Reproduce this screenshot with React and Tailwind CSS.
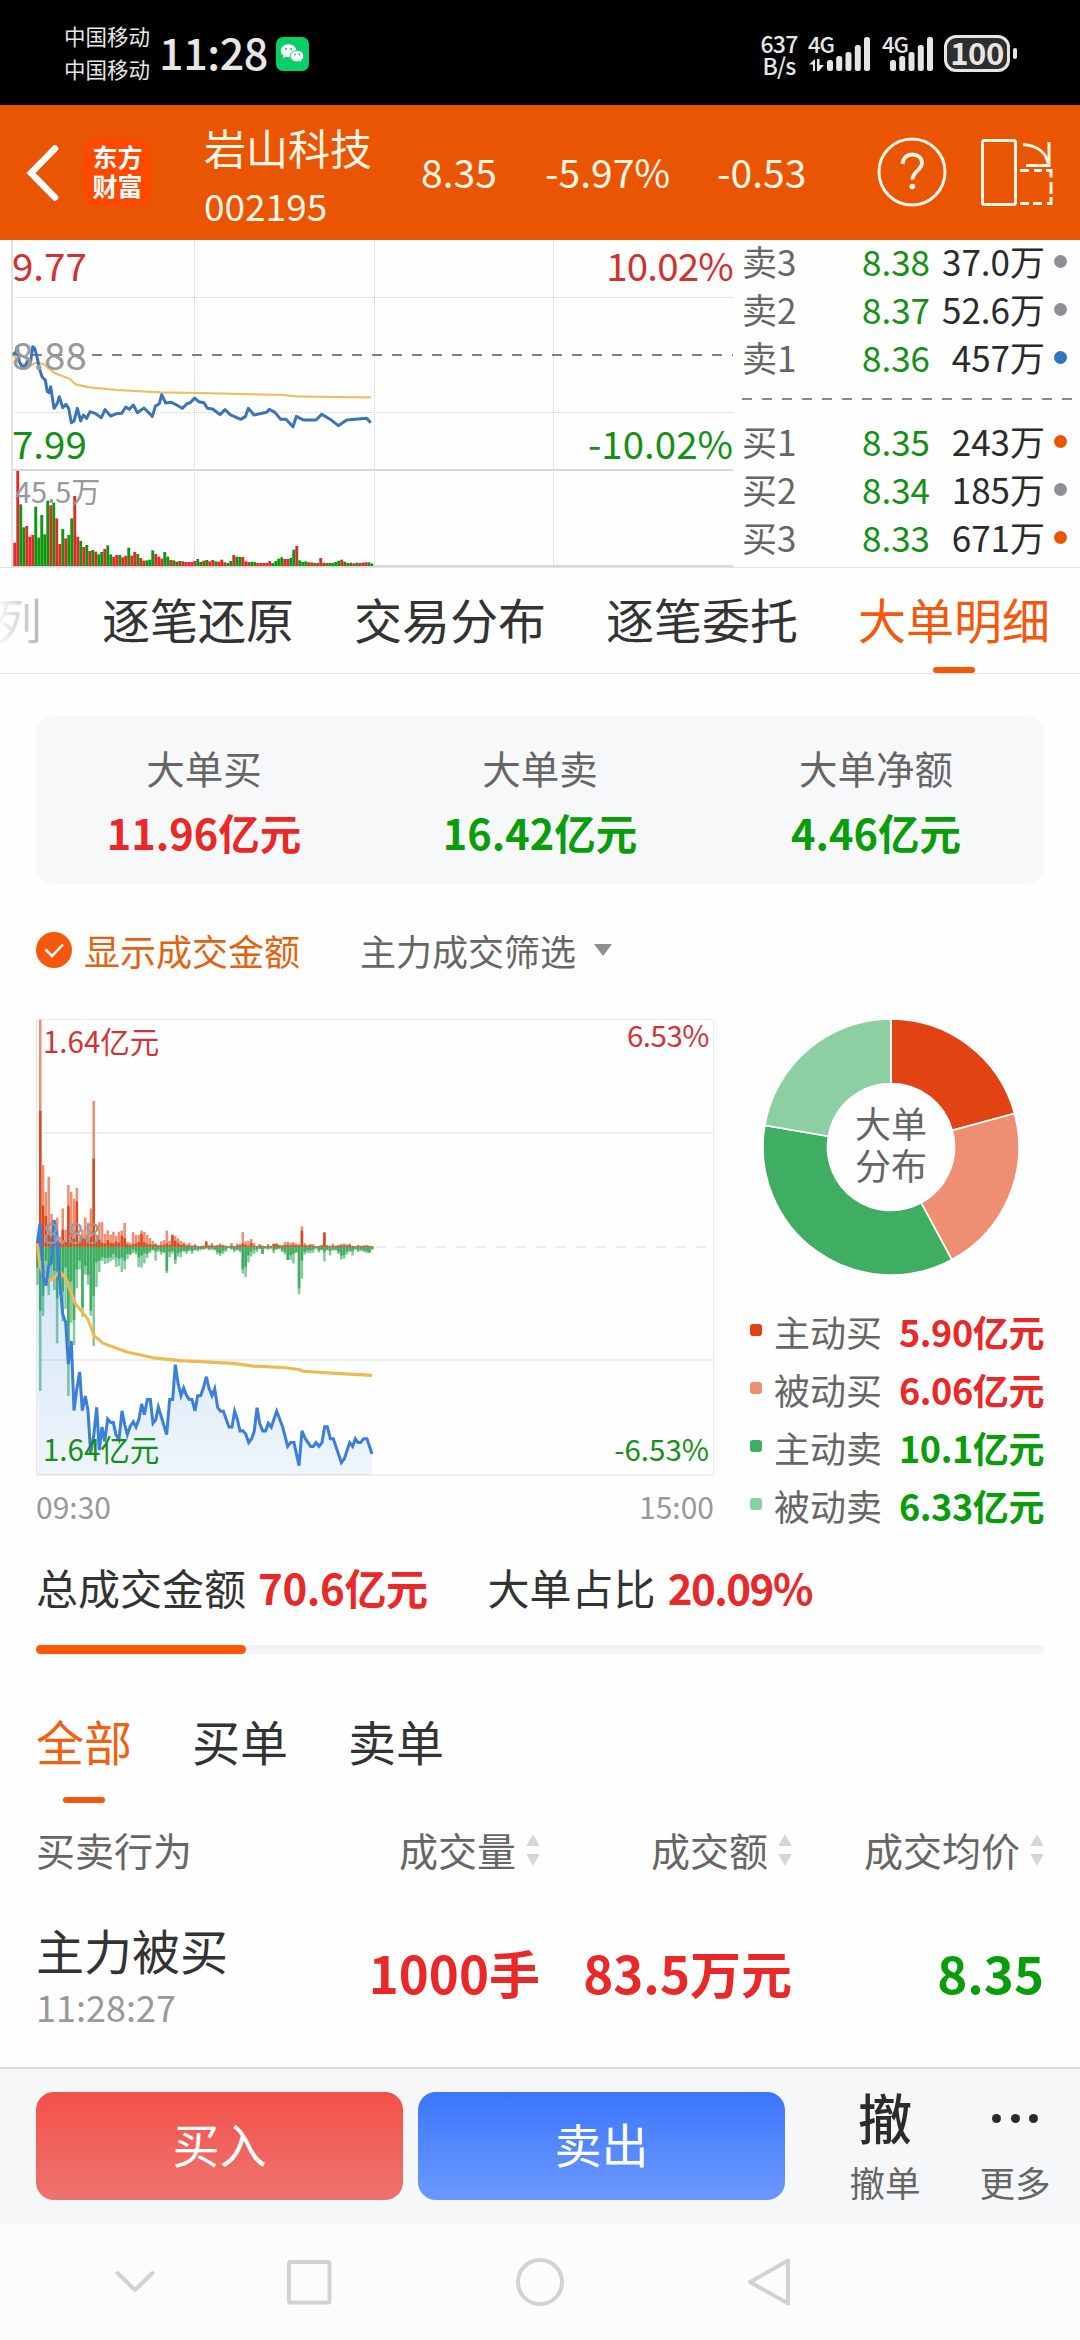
import { Fragment } from "react";

const orderBook = [
  { label: "卖3", price: "8.38", amount: "37.0万", dot: "bg-[#8f8f96]" },
  { label: "卖2", price: "8.37", amount: "52.6万", dot: "bg-[#8f8f96]" },
  { label: "卖1", price: "8.36", amount: "457万", dot: "bg-[#3072c4]" },
  { label: "买1", price: "8.35", amount: "243万", dot: "bg-[#ea5504]" },
  { label: "买2", price: "8.34", amount: "185万", dot: "bg-[#8f8f96]" },
  { label: "买3", price: "8.33", amount: "671万", dot: "bg-[#ea5504]" },
];

const summary = [
  { label: "大单买", value: "11.96亿元", color: "text-[#e92828]" },
  { label: "大单卖", value: "16.42亿元", color: "text-[#0a9d0a]" },
  { label: "大单净额", value: "4.46亿元", color: "text-[#0a9d0a]" },
];

const shares = [
  { label: "主动买", value: "5.90亿元", amount: 5.9, fill: "#e14315", dot: "bg-[#e14315]", color: "text-[#e92828]" },
  { label: "被动买", value: "6.06亿元", amount: 6.06, fill: "#ee8f73", dot: "bg-[#ee8f73]", color: "text-[#e92828]" },
  { label: "主动卖", value: "10.1亿元", amount: 10.1, fill: "#3fae63", dot: "bg-[#3fae63]", color: "text-[#0a9d0a]" },
  { label: "被动卖", value: "6.33亿元", amount: 6.33, fill: "#8ccfa3", dot: "bg-[#8ccfa3]", color: "text-[#0a9d0a]" },
];

// One entry per minute: colour (r = up, g = down) and bar height
const volumes =
  "r70 r285 g185 g116 r120 r88 r93 g178 g85 g153 g95 g196 r182 g190 r143 r66 g111 r83 g93 g143 r210 r88 g75 r57 g63 r45 g48 r43 g35 g42 r51 g62 g35 r28 r33 g33 r26 r31 g55 r31 r42 g36 r24 r16 g17 g19 g47 r36 r28 r22 g42 g28 r18 g17 r13 g15 r14 r12 r12 r12 r15 g21 g12 r16 g18 r14 r18 g14 r13 r19 r11 g9 g15 r33 g28 g27 r27 r14 r12 g13 g12 r9 r9 r9 r9 r15 g9 g15 g22 g26 r21 r21 g24 g49 r60 g17 g12 g14 r11 r11 g9 r9 r24 g10 r9 g9 g9 g12 g16 r19 g13 r9 g10 r8 g10 r9 r10 r11 g11 g8".split(
    " "
  );

const buyTotal = [
  10, 660, 238, 160, 204, 96, 70, 85, 30, 112, 50, 180, 160, 140, 172, 30, 50, 85, 70, 112, 424, 30, 72, 72, 38, 48, 36,
  44, 32, 44, 48, 70, 15, 12, 43, 34, 35, 48, 44, 35, 26, 18, 10, 6, 16, 20, 48, 18, 36, 32, 25, 18, 14, 8, 12, 4, 8, 3,
  3, 4, 17, 5, 11, 4, 6, 10, 7, 4, 2, 12, 3, 10, 8, 43, 16, 18, 23, 11, 3, 8, 4, 2, 8, 3, 9, 10, 6, 5, 14, 15, 12, 14,
  10, 8, 60, 11, 5, 9, 8, 2, 3, 6, 42, 5, 3, 9, 3, 6, 9, 10, 8, 10, 3, 3, 6, 3, 5, 6, 3, 2,
];
const buyActive = [
  5, 395, 120, 90, 35, 30, 20, 15, 12, 50, 14, 120, 40, 24, 132, 12, 25, 24, 15, 30, 256, 14, 20, 12, 10, 20, 12, 10, 16,
  12, 32, 26, 8, 5, 8, 10, 14, 38, 14, 8, 8, 6, 8, 4, 5, 6, 10, 6, 34, 18, 12, 6, 8, 4, 5, 3, 5, 2, 2, 3, 15, 3, 5, 3, 4,
  5, 4, 2, 2, 4, 2, 4, 5, 10, 6, 4, 12, 4, 2, 5, 3, 2, 4, 3, 9, 9, 4, 4, 5, 6, 4, 7, 5, 5, 47, 5, 4, 5, 4, 2, 3, 4, 42, 4,
  3, 4, 3, 4, 4, 5, 4, 5, 3, 2, 4, 3, 3, 3, 3, 2,
];
const sellTotal = [
  110, 418, 200, 110, 140, 95, 125, 280, 140, 216, 180, 433, 220, 285, 120, 65, 202, 80, 110, 200, 288, 116, 73, 40, 50,
  47, 42, 37, 58, 55, 73, 65, 35, 24, 18, 22, 58, 60, 48, 32, 18, 10, 40, 15, 22, 18, 76, 30, 20, 50, 28, 30, 15, 20, 13,
  20, 10, 13, 10, 8, 5, 10, 8, 10, 22, 26, 20, 14, 4, 8, 15, 10, 15, 78, 88, 45, 28, 20, 15, 6, 20, 5, 8, 5, 18, 8, 6,
  15, 22, 38, 38, 48, 18, 137, 92, 22, 18, 18, 17, 5, 16, 10, 42, 10, 25, 10, 10, 20, 37, 34, 22, 15, 25, 8, 15, 12, 15,
  18, 18, 8,
];
const sellActive = [
  60, 185, 142, 40, 60, 50, 70, 150, 80, 130, 60, 280, 100, 212, 66, 40, 175, 55, 82, 185, 142, 45, 40, 30, 32, 32, 30,
  20, 30, 34, 30, 40, 20, 20, 8, 14, 30, 25, 18, 20, 12, 8, 12, 8, 14, 15, 70, 15, 12, 38, 18, 14, 10, 12, 8, 12, 8, 8,
  6, 6, 4, 6, 5, 8, 16, 18, 12, 8, 3, 5, 8, 8, 10, 65, 58, 25, 14, 8, 8, 5, 20, 4, 5, 4, 10, 6, 4, 10, 15, 38, 24, 20,
  14, 120, 40, 14, 10, 10, 8, 4, 10, 8, 14, 8, 12, 8, 8, 14, 25, 24, 14, 10, 12, 6, 10, 8, 10, 12, 16, 6,
];

const dayPrice =
  "38,357 46,355 52,335 58,380 66,395 76,393 84,375 92,380 98,335 104,340 112,370 118,400 126,425 136,436 142,470 148,473 152,455 162,520 172,505 178,485 188,518 198,508 206,520 214,563 222,558 232,520 242,558 250,540 260,550 270,530 285,535 304,548 315,524 332,543 350,536 365,535 377,516 388,523 400,510 412,533 432,519 457,544 466,514 478,506 485,479 497,504 514,502 530,510 547,520 560,507 572,502 584,489 596,500 612,503 622,520 638,522 660,539 675,524 692,540 722,553 736,545 745,520 762,540 800,532 808,523 825,532 842,553 858,553 879,575 889,544 910,555 948,555 965,538 995,556 1015,572 1040,555 1100,550 1112,563";
const dayAverage =
  "38,357 60,385 90,392 108,383 130,387 165,415 210,432 226,448 270,457 350,465 480,472 600,474 850,480 890,484 1000,486 1112,487";

const flowPrice =
  "52,710 60,652 68,770 70,810 78,832 86,775 94,765 102,642 110,680 118,800 128,915 137,938 145,1060 154,993 162,1195 170,1135 179,1083 187,1195 196,1153 204,1195 212,1320 221,1270 230,1186 238,1310 246,1243 254,1285 263,1220 272,1230 280,1230 288,1265 297,1280 306,1196 314,1235 322,1265 331,1240 340,1228 348,1243 357,1220 365,1176 373,1207 382,1163 391,1163 399,1232 407,1222 415,1185 424,1213 440,1265 449,1163 458,1163 466,1062 474,1115 483,1152 491,1130 500,1152 508,1163 516,1163 525,1196 533,1152 542,1152 550,1130 559,1097 567,1130 576,1152 584,1132 593,1186 601,1197 610,1197 627,1243 636,1243 644,1197 652,1220 660,1254 669,1254 678,1265 686,1288 695,1277 703,1254 711,1187 719,1232 728,1254 737,1254 745,1232 754,1243 770,1197 788,1243 803,1299 812,1288 822,1288 837,1355 846,1254 856,1277 872,1299 880,1299 888,1288 897,1299 906,1288 914,1242 922,1242 931,1277 940,1277 964,1346 973,1335 989,1288 998,1299 1006,1277 1014,1288 1022,1288 1031,1277 1041,1277 1056,1321";
const flowAverage =
  "52,712 60,775 70,800 88,818 100,812 118,790 138,812 166,885 204,930 222,978 250,1000 320,1025 400,1042 480,1050 640,1058 700,1066 790,1070 836,1076 850,1081 950,1087 1056,1093";

function SignalBars({ className }) {
  return (
    <svg width="43" height="34" viewBox="0 0 43 34" fill="#e6e6e6" className={className}>
      <rect x="0" y="23" width="6" height="11" rx="2.5" />
      <rect x="9.2" y="19" width="6" height="15" rx="2.5" />
      <rect x="18.5" y="15" width="6" height="19" rx="2.5" />
      <rect x="27.8" y="8" width="6" height="26" rx="2.5" />
      <rect x="37" y="0" width="6" height="34" rx="2.5" />
    </svg>
  );
}

function StatusBar() {
  return (
    <div className="flex h-[105px] items-start bg-black pl-[64px] text-[#e6e6e6]">
      <div className="mt-[19px] text-[21.5px] leading-[33px]">
        <div>中国移动</div>
        <div>中国移动</div>
      </div>
      <div className="ml-[9px] mt-[26px] w-[106px] whitespace-nowrap text-[43px] font-medium leading-[50px] tracking-[-0.4px]">11:28</div>
      <svg width="33" height="34" viewBox="0 0 33 34" className="ml-[11px] mt-[37px]">
        <rect width="33" height="34" rx="7" fill="#08cf67" />
        <path d="M12.5 7.2c-4.400 0-7.700 2.900-7.700 6.500 0 2.100 1.100 3.900 2.900 5.100l-.7 2.400 2.700-1.400c.9.3 1.800.4 2.800.4 4.400 0 7.800-2.900 7.800-6.500s-3.400-6.500-7.800-6.500z" fill="#fff" />
        <path d="M21 13.300c-3.700 0-6.700 2.500-6.700 5.800s3 5.800 6.700 5.800c.8 0 1.600-.1 2.300-.3l2.300 1.200-.6-2c1.600-1.100 2.700-2.800 2.700-4.700 0-3.300-3-5.800-6.700-5.800z" fill="#fff" stroke="#08cf67" strokeWidth="1" />
        <g fill="#08cf67">
          <circle cx="10" cy="12" r="1.100" />
          <circle cx="15.200" cy="12" r="1.100" />
          <circle cx="19" cy="17.500" r=".9" />
          <circle cx="23.300" cy="17.500" r=".9" />
        </g>
      </svg>
      <div className="ml-[450px] mt-[32px] w-[40px] text-center text-[23px] font-medium leading-[22px] tracking-[-0.8px]">
        <div>637</div>
        <div>B/s</div>
      </div>
      <div className="relative ml-[9px] mt-[37px] h-[34px] w-[64px]">
        <span className="absolute left-0 top-[-5px] text-[22px] font-medium leading-[22px] tracking-[-1px]">4G</span>
        <svg width="16" height="12" viewBox="0 0 16 12" fill="#e6e6e6" className="absolute left-[1px] top-[22px]">
          <path d="M0 5.500 6 0V12H4V5.500zM8 0h2.500v6H15l-5 6H8z" />
        </svg>
        <SignalBars className="absolute left-[19px] top-0" />
      </div>
      <div className="relative ml-[10px] mt-[37px] h-[34px] w-[52px]">
        <span className="absolute left-0 top-[-5px] text-[22px] font-medium leading-[22px] tracking-[-1px]">4G</span>
        <SignalBars className="absolute left-[8px] top-0" />
      </div>
      <div className="ml-[10px] mt-[35px] flex h-[37px] w-[66px] items-center justify-center rounded-[12px] border-[3px] border-[#e6e6e6] bg-[#2e2e2e] text-[31px] font-bold leading-none tracking-[-0.5px]">
        <span className="-mt-[4px]">100</span>
      </div>
      <div className="ml-[3px] mt-[48px] h-[11px] w-[4px] rounded-full bg-[#e6e6e6]" />
    </div>
  );
}

function Header() {
  return (
    <div className="flex h-[135px] items-start bg-[#ea5504] text-[#fff6e6]">
      <svg width="34" height="58" viewBox="0 0 34 58" className="ml-[26px] mt-[39px]" fill="none" stroke="#fff" strokeWidth="6.500" strokeLinecap="round" strokeLinejoin="miter">
        <path d="M29 4.500 5 29l24 24.500" />
      </svg>
      <div className="ml-[24px] mt-[34px] flex h-[67px] w-[67px] flex-col items-center justify-center rounded-[13px] bg-[#ff4800] text-[25px] font-bold leading-[29px] text-white">
        <span className="-mt-[4px]">东方</span>
        <span>财富</span>
      </div>
      <div className="ml-[53px] mt-[16px] w-[170px]">
        <div className="text-[42px] leading-[52px]">岩山科技</div>
        <div className="mt-[8px] text-[37px] leading-[48px]">002195</div>
      </div>
      <div className="ml-[47px] mt-[41px] flex text-[39px] leading-[50px]">
        <div className="w-[124px]">8.35</div>
        <div className="w-[172px]">-5.97%</div>
        <div className="w-[160px]">-0.53</div>
      </div>
      <svg width="70" height="70" viewBox="0 0 70 70" className="mt-[32px]" fill="none" stroke="#fff6e6" strokeWidth="3">
        <circle cx="35" cy="35" r="33" />
        <path d="M25.500 27c.5-6 4.500-9.500 10-9.500s9.500 3.500 9.500 8.500c0 7-9.500 8.500-9.500 16.500" strokeWidth="3.800" />
        <circle cx="35.300" cy="49.500" r="2.800" fill="#fff6e6" stroke="none" />
      </svg>
      <svg width="74" height="70" viewBox="0 0 74 70" className="ml-[33px] mt-[33px]" fill="none" stroke="#fff6e6" strokeWidth="3">
        <rect x="2.500" y="2.500" width="33" height="64" rx="2" />
        <path d="M43 6.500c13 1 23 7 25 19" />
        <path d="M69 4v23.500H46" />
        <path d="M40 32.500h9M54 32.500h8M66 32.500h5v7M71 44v12M71 59v6.500h-4M62 65.500h-9M49 65.500h-9" />
      </svg>
    </div>
  );
}

function MinuteChart() {
  return (
    <svg width="736" height="328" viewBox="0 0 736 328" className="shrink-0">
      <g stroke="#d4d4d4" strokeDasharray="1 1">
        <path d="M12 57.500H733M12 172.500H733M194.500 0V326M374.500 0V326M553.500 0V326" />
      </g>
      <path d="M12 0V327" stroke="#e2e2e2" strokeWidth="2" />
      <path d="M12 230H733M12 326H733" stroke="#d8d8d8" strokeWidth="2" />
      <path d="M12 115H733" stroke="#808080" strokeWidth="2" strokeDasharray="10 10" />
      {volumes.map((v, i) => (
        <rect
          key={i}
          x={13.300 + i * 3}
          y={326 - Number(v.slice(1)) / 3}
          width="2.900"
          height={Number(v.slice(1)) / 3}
          fill={v[0] === "r" ? "#e02b2b" : "#0f970f"}
        />
      ))}
      <g transform="translate(0 -5) scale(.33333)" fill="none" strokeLinejoin="round">
        <polyline points={dayAverage} stroke="#edbf5f" strokeWidth="6.500" />
        <polyline points={dayPrice} stroke="#3a74ba" strokeWidth="9" />
      </g>
      <g fontSize="38.500">
        <text x="12" y="41" fill="#d33030">9.77</text>
        <text x="12" y="130" fill="#999">8.88</text>
        <text x="12" y="219" fill="#149014">7.99</text>
        <text x="733" y="41" fill="#d33030" textAnchor="end" letterSpacing="-.8">10.02%</text>
        <text x="733" y="219" fill="#149014" textAnchor="end">-10.02%</text>
      </g>
      <text x="15" y="263" fill="#999" fontSize="29">45.5万</text>
    </svg>
  );
}

function OrderBook() {
  return (
    <div className="-mt-[3px] ml-[6px] w-[330px]">
      {orderBook.map((row, i) => (
        <Fragment key={row.label}>
          {i === 3 && (
            <svg width="330" height="36" className="block">
              <path d="M0 18H330" stroke="#8a8a8a" strokeWidth="2" strokeDasharray="10 10" />
            </svg>
          )}
          <div className="flex h-[48px] items-center whitespace-nowrap text-[35px] leading-[48px]">
            <span className="w-[120px] text-[#666]">{row.label}</span>
            <span className="w-[70px] text-[#149014]">{row.price}</span>
            <span className="w-[113px] text-right text-[#2b2b2b]">{row.amount}</span>
            <span className={`ml-[9px] size-[13px] rounded-full ${row.dot}`} />
          </div>
        </Fragment>
      ))}
    </div>
  );
}

function PageTabs() {
  return (
    <div className="flex h-[107px] justify-end gap-[60px] overflow-hidden whitespace-nowrap border-b border-t border-[#e2e2e2] pr-[30px] text-[48px] leading-[100px] text-[#333]">
      <span className="bg-gradient-to-r from-white to-[#b5b5b5] bg-clip-text text-transparent">列</span>
      <span>逐笔还原</span>
      <span>交易分布</span>
      <span>逐笔委托</span>
      <span className="relative text-[#f4580c]">
        大单明细
        <span className="absolute bottom-0 left-[75px] h-[6px] w-[42px] rounded-[3px] bg-[#f4580c]" />
      </span>
    </div>
  );
}

function FlowChart() {
  const bar = (list, color, dir) =>
    list.map((h, i) => <rect key={i} x={48.500 + i * 8.440} y={dir < 0 ? 720 - h : 720} width="7.600" height={h} fill={color} />);

  return (
    <svg width="678" height="458" viewBox="0 0 678 458">
      <defs>
        <linearGradient id="area" x1="0" y1="0" x2="0" y2="1">
          <stop offset="0" stopColor="#3a8ae0" stopOpacity=".24" />
          <stop offset="1" stopColor="#3a8ae0" stopOpacity=".08" />
        </linearGradient>
      </defs>
      <path d="M.5 .5H677.500V456" stroke="#ececec" fill="none" />
      <path d="M.5 0V457" stroke="#e6e6e6" />
      <path d="M0 114H678M0 341H678M0 456H678" stroke="#eee" strokeWidth="2" />
      <path d="M0 228H675" stroke="#ededed" strokeWidth="2" strokeDasharray="10 10" />
      <g transform="translate(-16 -20) scale(.33333 .34437)">
        {bar(buyTotal, "#ee8f73", -1)}
        {bar(buyActive, "#dc4a20", -1)}
        {bar(sellTotal, "#84cb9d", 1)}
        {bar(sellActive, "#3fae63", 1)}
        <polygon points={`52,1382 ${flowPrice} 1056,1382`} fill="url(#area)" />
        <polyline points={flowAverage} fill="none" stroke="#edba50" strokeWidth="9" strokeLinejoin="round" />
        <polyline points={flowPrice} fill="none" stroke="#3a7fd8" strokeWidth="9" />
      </g>
      <g fontSize="29.500">
        <text x="7" y="34" fill="#cf3535">1.64亿元</text>
        <text x="7" y="225" fill="#999">8.88</text>
        <text x="7" y="442" fill="#149014">1.64亿元</text>
        <text x="673" y="28" fill="#cf3535" textAnchor="end" letterSpacing="-.5">6.53%</text>
        <text x="673" y="442" fill="#149014" textAnchor="end">-6.53%</text>
      </g>
    </svg>
  );
}

function Donut() {
  const total = shares.reduce((sum, s) => sum + s.amount, 0);
  const point = (r, t) => `${128 + r * Math.sin(t * 2 * Math.PI)} ${128 - r * Math.cos(t * 2 * Math.PI)}`;
  let from = 0;

  return (
    <svg width="256" height="256" viewBox="0 0 256 256" className="ml-[13px]">
      {shares.map((s) => {
        const to = from + s.amount / total;
        const d = `M${point(128, from)}A128 128 0 0 1 ${point(128, to)}L${point(63.500, to)}A63.500 63.500 0 0 0 ${point(63.500, from)}Z`;
        from = to;
        return <path key={s.label} d={d} fill={s.fill} stroke="#fff" strokeWidth="1.600" />;
      })}
      <g fontSize="36" fill="#666" textAnchor="middle">
        <text x="128" y="119">大单</text>
        <text x="128" y="161">分布</text>
      </g>
    </svg>
  );
}

function SortHead({ children, className }) {
  return (
    <div className={`flex items-center justify-end ${className}`}>
      {children}
      <svg width="14" height="32" viewBox="0 0 14 32" className="ml-[10px] mt-[1px]" fill="#d6d6d6" stroke="#d6d6d6" strokeLinejoin="round">
        <path d="M7 1 13 11.500H1zM7 31 13 20.500H1z" />
      </svg>
    </div>
  );
}

function TradeBar() {
  return (
    <div className="flex h-[157px] border-t-2 border-[#d9dadb] bg-[#f6f7f9] pl-[36px] pt-[23px]">
      <button className="h-[108px] w-[367px] rounded-[18px] bg-gradient-to-b from-[#f35049] to-[#ec746e] pb-[6px] text-[47px] leading-[100px] text-white">
        买入
      </button>
      <button className="ml-[15px] h-[108px] w-[367px] rounded-[18px] bg-gradient-to-b from-[#3a76fb] to-[#6c98fe] pb-[6px] text-[47px] leading-[100px] text-white">
        卖出
      </button>
      <div className="ml-[35px] w-[130px] text-center">
        <div className="-mt-[3px] text-[54px] font-medium leading-[56px] text-[#2b2b2b]">撤</div>
        <div className="mt-[15px] text-[35.500px] leading-[44px] text-[#666]">撤单</div>
      </div>
      <div className="w-[130px] text-center">
        <div className="flex h-[53px] items-center justify-center gap-[9.500px]">
          <span className="size-[9px] rounded-full bg-[#2b2b2b]" />
          <span className="size-[9px] rounded-full bg-[#2b2b2b]" />
          <span className="size-[9px] rounded-full bg-[#2b2b2b]" />
        </div>
        <div className="mt-[15px] text-[35.500px] leading-[44px] text-[#666]">更多</div>
      </div>
    </div>
  );
}

function SystemNav() {
  return (
    <svg width="1080" height="116" viewBox="0 0 1080 116" className="block bg-[#fcfcfc]" fill="none" stroke="#d2d2d2" strokeWidth="4" strokeLinejoin="round" strokeLinecap="round">
      <path d="M117.500 49 135 66 152.500 49" />
      <rect x="289" y="38" width="40.500" height="40.500" rx="1.500" />
      <circle cx="540" cy="58" r="22" />
      <path d="M788 36.500V79.500L750 58z" />
    </svg>
  );
}

export default function App() {
  return (
    <div className="h-[2340px] w-[1080px] overflow-hidden bg-[#fefefe] font-['Noto_Sans_CJK_SC',sans-serif]">
      <StatusBar />
      <Header />
      <div className="flex h-[327px] overflow-hidden">
        <MinuteChart />
        <OrderBook />
      </div>
      <PageTabs />

      <div className="h-[1393px] px-[36px] pt-[42px]">
        <div className="grid h-[168px] grid-cols-3 rounded-[18px] bg-[#f7f8fa] pt-[24px] text-center">
          {summary.map((s) => (
            <div key={s.label}>
              <div className="text-[38.500px] leading-[54px] text-[#666]">{s.label}</div>
              <div className={`mt-[9px] text-[41.500px] font-bold leading-[58px] ${s.color}`}>{s.value}</div>
            </div>
          ))}
        </div>

        <div className="mt-[40px] flex h-[52px] items-center text-[36px] leading-[52px]">
          <svg width="36" height="36" viewBox="0 0 36 36">
            <circle cx="18" cy="18" r="18" fill="#f4580c" />
            <path d="M9.500 17.500 16 24 27 12.500" fill="none" stroke="#fff" strokeWidth="2.500" />
          </svg>
          <span className="-mt-[1px] ml-[12px] text-[#e2620f]">显示成交金额</span>
          <span className="-mt-[1px] ml-[60px] text-[#666]">主力成交筛选</span>
          <svg width="18" height="12" viewBox="0 0 18 12" className="ml-[18px]">
            <path d="M0 0H18L9 12z" fill="#8f8f8f" />
          </svg>
        </div>

        <div className="mt-[43px] flex h-[520px]">
          <div className="w-[678px]">
            <FlowChart />
            <div className="mt-[7px] flex justify-between text-[30px] leading-[44px] text-[#999]">
              <span>09:30</span>
              <span>15:00</span>
            </div>
          </div>
          <div className="ml-[36px] w-[294px]">
            <Donut />
            <div className="mt-[26px]">
              {shares.map((s) => (
                <div key={s.label} className="flex h-[58px] items-center whitespace-nowrap text-[36px] leading-[52px]">
                  <span className={`size-[12px] rounded-[3px] ${s.dot}`} />
                  <span className="mt-[2px] ml-[12px] text-[#666]">{s.label}</span>
                  <span className={`mt-[2px] ml-auto font-bold tracking-[-0.4px] ${s.color}`}>{s.value}</span>
                </div>
              ))}
            </div>
          </div>
        </div>

        <div className="mt-[18px] flex h-[60px] items-center text-[42px] leading-[60px] text-[#333]">
          <span>总成交金额</span>
          <span className="ml-[12px] font-bold tracking-[-0.4px] text-[#e92828]">70.6亿元</span>
          <span className="ml-[60px]">大单占比</span>
          <span className="ml-[12px] font-bold tracking-[-1.500px] text-[#e92828]">20.09%</span>
        </div>
        <div className="mt-[28px] h-[9px] rounded-full bg-[#f3f3f5]">
          <div className="h-full w-[210px] rounded-full bg-[#ff5602]" />
        </div>

        <div className="mt-[54px] flex h-[95px] gap-[60px] text-[48px] leading-[64px] text-[#333]">
          <span className="relative w-[96px] text-[#f06010]">
            全部
            <span className="absolute bottom-0 left-[27px] h-[6px] w-[42px] rounded-[3px] bg-[#f4580c]" />
          </span>
          <span className="w-[96px]">买单</span>
          <span className="w-[96px]">卖单</span>
        </div>

        <div className="mt-[19px] flex h-[54px] items-center text-[39px] leading-[54px] text-[#666]">
          <span className="w-[252px]">买卖行为</span>
          <SortHead className="w-[252px]">成交量</SortHead>
          <SortHead className="w-[252px]">成交额</SortHead>
          <SortHead className="w-[252px]">成交均价</SortHead>
        </div>
        <div className="mt-[34px] flex h-[124px] items-center whitespace-nowrap">
          <div className="w-[252px]">
            <div className="text-[48px] leading-[68px] text-[#333]">主力被买</div>
            <div className="-mt-[1px] text-[36px] leading-[48px] text-[#999]">11:28:27</div>
          </div>
          <span className="w-[252px] text-right text-[51px] font-bold text-[#e92828]">1000手</span>
          <span className="w-[252px] text-right text-[51px] font-bold text-[#e92828]">83.5万元</span>
          <span className="w-[252px] text-right text-[51px] font-bold text-[#0a9d0a]">8.35</span>
        </div>
      </div>

      <TradeBar />
      <SystemNav />
    </div>
  );
}
